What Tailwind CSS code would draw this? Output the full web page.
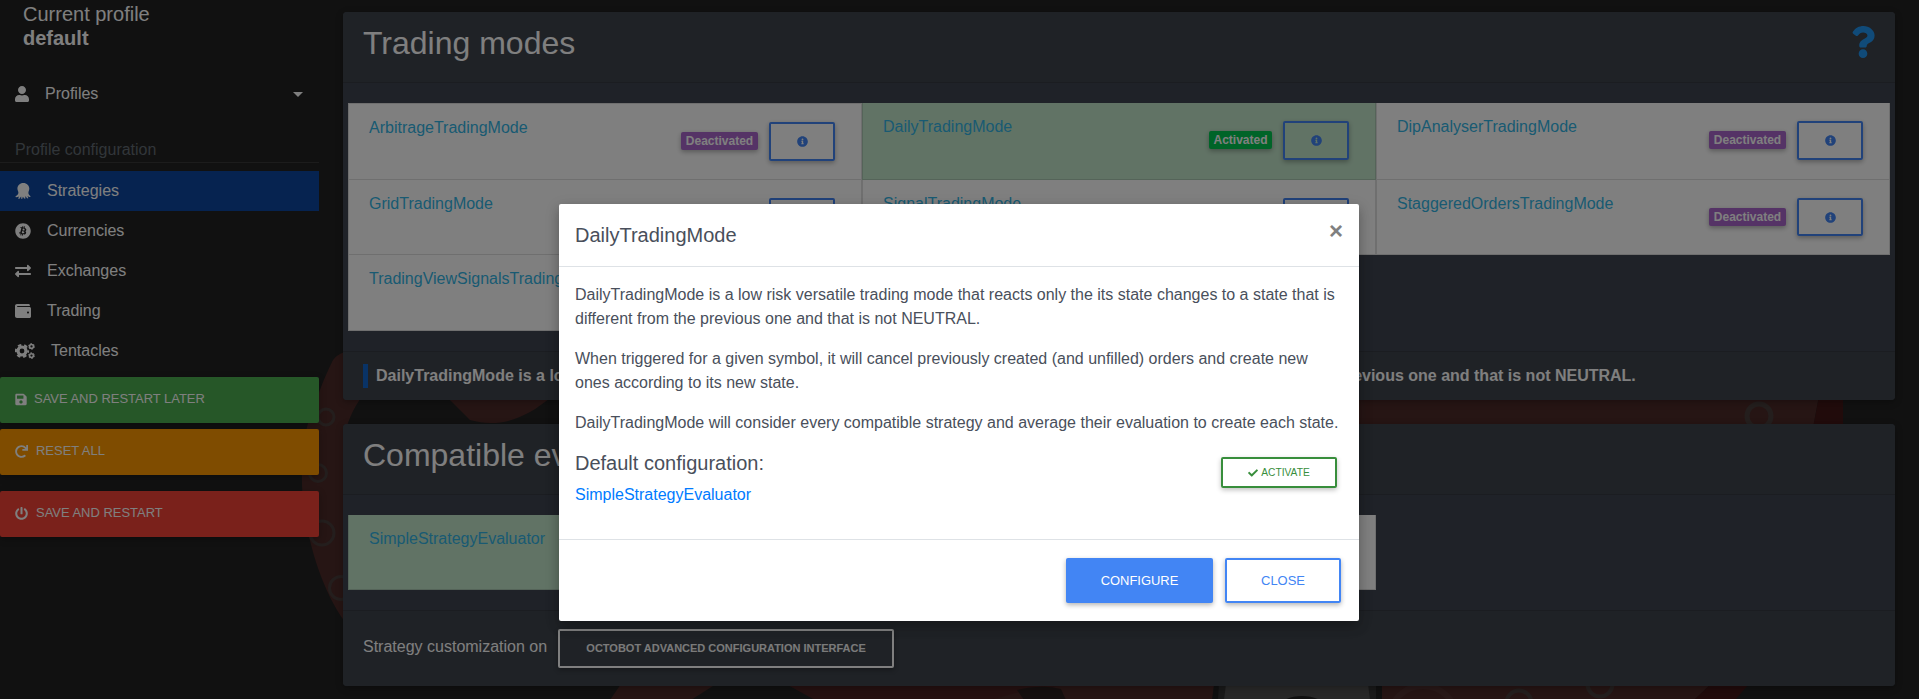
<!DOCTYPE html>
<html lang="en">
<head>
<meta charset="utf-8">
<title>OctoBot - Profile</title>
<script src="https://cdn.jsdelivr.net/npm/@tailwindcss/browser@4"></script>
</head>
<body class="relative h-[699px] w-[1919px] overflow-hidden bg-[#222] font-['Liberation_Sans',Arial,sans-serif] text-base text-white">

<!-- icon sprite -->
<svg class="hidden">
  <symbol id="user" viewBox="0 0 448 512"><path d="M224 256c70.7 0 128-57.3 128-128S294.7 0 224 0 96 57.3 96 128s57.3 128 128 128zm89.6 32h-16.7c-22.2 10.2-46.9 16-72.9 16s-50.6-5.8-72.9-16h-16.7C60.2 288 0 348.2 0 422.4V464c0 26.5 21.5 48 48 48h352c26.5 0 48-21.5 48-48v-41.6c0-74.2-60.2-134.4-134.4-134.4z"/></symbol>
  <symbol id="octopus" viewBox="0 0 16 16"><path d="M8.300 0C4.800 0 2.400 2.500 2.400 5.600c0 2 1 2.800 1 4.200 0 1.600-1.200 2.200-2.900 3.600-.3.500.1.900.7.800 1.100-.1 1.900-.4 2.800-.8-.2.700-.6 1.100-.7 1.900 0 .6.600.8 1.100.4.800-.7 1.100-1.500 1.700-2.100.300.700 0 1.300.1 1.900.2.600 1 .600 1.200 0 .200-.600.200-1.300.500-1.800.700.500.800 1.300 1.500 1.900.500.400 1.100 0 1-.600 0-.600-.3-1.100-.2-1.700.900.400 1.200 1.400 2 2 .6.400 1.200 0 1-.600-.200-.700-.600-1.200-.700-1.800.900.400 1.500 1 2.500 1 .6 0 .700-.600.300-1-1.300-1-1.900-1.700-1.900-3.200 0-1.400.900-2.200.900-4.100C14.300 2.500 11.800 0 8.300 0z"/></symbol>
  <symbol id="bitcoin" viewBox="0 0 512 512"><path d="M504 256c0 136.967-111.033 248-248 248S8 392.967 8 256 119.033 8 256 8s248 111.033 248 248zm-141.651-35.33c4.937-32.999-20.191-50.739-54.55-62.573l11.146-44.702-27.213-6.781-10.851 43.524c-7.154-1.783-14.502-3.464-21.803-5.13l10.929-43.81-27.198-6.781-11.153 44.686c-5.922-1.349-11.735-2.682-17.377-4.084l.031-.14-37.53-9.37-7.239 29.062s20.191 4.627 19.765 4.913c11.022 2.751 13.014 10.044 12.68 15.825l-12.696 50.925c.76.194 1.744.473 2.829.907-.907-.225-1.876-.473-2.876-.713l-17.796 71.338c-1.349 3.348-4.767 8.37-12.471 6.464.271.395-19.78-4.937-19.78-4.937l-13.51 31.147 35.414 8.827c6.588 1.651 13.045 3.379 19.4 5.006l-11.262 45.213 27.182 6.781 11.153-44.733a1038.209 1038.209 0 0 0 21.687 5.627l-11.115 44.523 27.213 6.781 11.262-45.128c46.404 8.781 81.299 5.239 95.986-36.727 11.834-33.79-.589-53.281-25.004-65.991 17.78-4.098 31.174-15.792 34.747-39.949zm-62.177 87.179c-8.41 33.79-65.308 15.523-83.755 10.943l14.944-59.899c18.446 4.603 77.6 13.717 68.811 48.956zm8.417-87.667c-7.673 30.736-55.031 15.12-70.393 11.292l13.548-54.327c15.363 3.828 64.836 10.973 56.845 43.035z"/></symbol>
  <symbol id="exchange" viewBox="0 0 512 512"><path d="M0 168v-16c0-13.255 10.745-24 24-24h360V80c0-21.367 25.899-32.042 40.971-16.971l80 80c9.372 9.373 9.372 24.569 0 33.941l-80 80C409.956 271.982 384 261.456 384 240v-48H24c-13.255 0-24-10.745-24-24zm488 152H128v-48c0-21.314-25.862-32.08-40.971-16.971l-80 80c-9.372 9.373-9.372 24.569 0 33.941l80 80C102.057 463.997 128 453.437 128 432v-48h360c13.255 0 24-10.745 24-24v-16c0-13.255-10.745-24-24-24z"/></symbol>
  <symbol id="wallet" viewBox="0 0 512 512"><path d="M461.2 128H80c-8.84 0-16-7.16-16-16s7.16-16 16-16h384c8.84 0 16-7.16 16-16 0-26.51-21.49-48-48-48H64C28.65 32 0 60.65 0 96v320c0 35.35 28.65 64 64 64h397.2c28.02 0 50.8-21.53 50.8-48V176c0-26.47-22.78-48-50.8-48zM416 336c-17.67 0-32-14.33-32-32s14.33-32 32-32 32 14.33 32 32-14.33 32-32 32z"/></symbol>
  <symbol id="cogs" viewBox="0 0 20 16"><g fill="none" stroke="currentColor"><circle cx="7" cy="8" r="4" stroke-width="3.200"/><circle cx="7" cy="8" r="6.100" stroke-width="2" stroke-dasharray="3.400 2.990" stroke-dashoffset="1.700"/><circle cx="16.500" cy="3.400" r="1.900" stroke-width="1.500"/><circle cx="16.500" cy="3.400" r="2.900" stroke-width="1" stroke-dasharray="1.600 1.440"/><circle cx="16.500" cy="12.600" r="1.900" stroke-width="1.500"/><circle cx="16.500" cy="12.600" r="2.900" stroke-width="1" stroke-dasharray="1.600 1.440"/></g></symbol>
  <symbol id="save" viewBox="0 0 448 512"><path d="M433.941 129.941l-83.882-83.882A48 48 0 0 0 316.118 32H48C21.49 32 0 53.49 0 80v352c0 26.51 21.49 48 48 48h352c26.51 0 48-21.49 48-48V163.882a48 48 0 0 0-14.059-33.941zM224 416c-35.346 0-64-28.654-64-64 0-35.346 28.654-64 64-64s64 28.654 64 64c0 35.346-28.654 64-64 64zm96-304.52V212c0 6.627-5.373 12-12 12H76c-6.627 0-12-5.373-12-12V108c0-6.627 5.373-12 12-12h228.52c3.183 0 6.235 1.264 8.485 3.515l3.48 3.480A11.996 11.996 0 0 1 320 111.480z"/></symbol>
  <symbol id="redo" viewBox="0 0 512 512"><path d="M500.33 0h-47.41a12 12 0 0 0-12 12.57l4 82.76A247.42 247.42 0 0 0 256 8C119.34 8 7.900 119.530 8 256.190 8.100 393.070 119.100 504 256 504a247.100 247.100 0 0 0 166.180-63.910 12 12 0 0 0 .480-17.430l-34-34a12 12 0 0 0-16.380-.550A176 176 0 1 1 402.100 157.800l-101.530-4.870a12 12 0 0 0-12.570 12v47.410a12 12 0 0 0 12 12h200.330a12 12 0 0 0 12-12V12a12 12 0 0 0-12-12z"/></symbol>
  <symbol id="power" viewBox="0 0 512 512"><path d="M400 54.1c63 45 104 118.6 104 201.9 0 136.8-110.8 247.7-247.5 248C120 504.3 8.2 393 8 256.4 7.9 173.1 48.9 99.3 111.8 54.2c11.7-8.3 28-4.8 35 7.7L162.6 90c5.9 10.5 3.1 23.8-6.6 31-41.5 30.8-68 79.6-68 134.9-.1 92.3 74.5 168.1 168 168.1 91.6 0 168.6-74.2 168-169.1-.3-51.8-24.7-101.8-68.1-134-9.7-7.2-12.4-20.5-6.5-30.9l15.8-28.1c7-12.4 23.2-16.1 34.8-7.8zM296 264V24c0-13.3-10.7-24-24-24h-32c-13.3 0-24 10.7-24 24v240c0 13.3 10.7 24 24 24h32c13.3 0 24-10.7 24-24z"/></symbol>
  <symbol id="info" viewBox="0 0 512 512"><path d="M256 8C119.043 8 8 119.083 8 256c0 136.997 111.043 248 248 248s248-111.003 248-248C504 119.083 392.957 8 256 8zm0 110c23.196 0 42 18.804 42 42s-18.804 42-42 42-42-18.804-42-42 18.804-42 42-42zm56 254c0 6.627-5.373 12-12 12h-88c-6.627 0-12-5.373-12-12v-24c0-6.627 5.373-12 12-12h12v-64h-12c-6.627 0-12-5.373-12-12v-24c0-6.627 5.373-12 12-12h64c6.627 0 12 5.373 12 12v100h12c6.627 0 12 5.373 12 12v24z"/></symbol>
  <symbol id="check" viewBox="0 0 512 512"><path d="M173.898 439.404l-166.4-166.4c-9.997-9.997-9.997-26.206 0-36.204l36.203-36.204c9.997-9.998 26.207-9.998 36.204 0L192 312.69 432.095 72.596c9.997-9.997 26.207-9.997 36.204 0l36.203 36.204c9.997 9.997 9.997 26.206 0 36.204l-294.4 294.401c-9.998 9.997-26.207 9.997-36.204-.001z"/></symbol>
  <symbol id="question" viewBox="0 0 384 512"><path d="M202.021 0C122.202 0 70.503 32.703 29.914 91.026c-7.363 10.58-5.093 25.086 5.178 32.874l43.138 32.709c10.373 7.865 25.132 6.026 33.253-4.148 25.049-31.381 43.63-49.449 82.757-49.449 30.764 0 68.816 19.799 68.816 49.631 0 22.552-18.617 34.134-48.993 51.164-35.423 19.86-82.299 44.576-82.299 106.405V320c0 13.255 10.745 24 24 24h72.471c13.255 0 24-10.745 24-24v-5.773c0-42.86 125.268-44.645 125.268-160.627C377.504 66.256 286.902 0 202.021 0zM192 373.459c-38.196 0-69.271 31.075-69.271 69.271 0 38.195 31.075 69.270 69.271 69.270s69.271-31.075 69.271-69.271-31.075-69.270-69.271-69.270z"/></symbol>
</svg>

<!-- octopus wallpaper -->
<svg class="absolute inset-0" width="1919" height="699" viewBox="0 0 1919 699" fill="none">
  <g fill="#4c2a28">
    <path d="M350 350C340 353 334 357 332 362C324 378 316 400 309 420C301 445 301 480 303 500C308 545 322 590 345 622L400 622L346 430C349 418 354 408 362 396Z"/>
    <path d="M446 396L470 420C498 428 525 420 552 396Z"/>
    <path d="M1300 396H1819L1813 428H1300Z"/>
    <path d="M621 684L610 700H691L716 684Z"/>
    <path d="M1376 684H1711L1694 700H1376Z"/>
  </g>
  <path fill="#4a2222" d="M786 684L815 700H1222V684Z"/>
  <path fill="#4c2a28" d="M990 700L1020 692L1060 686H1222V700Z"/>
  <path fill="#421717" d="M1819 396H1843V428H1813ZM1711 684H1749L1735 700H1694Z"/>
  <path fill="#2a1f1e" d="M1017 690Q1042 684 1061 689L1066 700H1024Z"/>
  <g stroke="#483d3b" stroke-width="3">
    <circle cx="326" cy="417" r="8"/><circle cx="318" cy="473" r="8.500"/>
    <circle cx="322" cy="533" r="12"/><circle cx="341" cy="588" r="11.500"/>
    <circle cx="1759" cy="416" r="12" stroke-width="5"/>
    <circle cx="1519" cy="703" r="12.500" stroke-width="4"/>
    <circle cx="1600" cy="684" r="12.500" stroke-width="4"/>
  </g>
  <circle cx="1423" cy="720" r="34" stroke="#523230" stroke-width="6"/>
  <path fill="#202020" d="M1214 684H1382V700H1212Z"/>
  <path fill="#333" d="M1219 684H1376V700H1218Z"/>
  <path fill="#505050" d="M1226 684H1368L1370 700H1224Z"/>
  <ellipse cx="1302" cy="706" rx="22" ry="10" fill="#202020"/>
</svg>

<div class="relative flex h-full">
  <!-- sidebar -->
  <aside class="flex w-[319px] shrink-0 flex-col">
    <div class="pt-[2px] pl-[23px] text-xl leading-6">Current profile<br><b>default</b></div>
    <div class="mt-[32px] flex h-6 items-center pl-[15px]">
      <svg class="h-4 w-[14px] fill-current"><use href="#user"/></svg>
      <span class="ml-4">Profiles</span>
      <i class="mr-4 ml-auto border-x-[5px] border-t-[5px] border-x-transparent border-t-white"></i>
    </div>
    <div class="mt-8 h-[25px] border-b border-white/10 pl-[15px] leading-6 text-[#636c74]">Profile configuration</div>
    <nav class="mt-2">
      <a class="flex h-10 items-center bg-[#0d47a1] pl-[15px]"><svg class="h-4 w-4 fill-current"><use href="#octopus"/></svg><span class="ml-4">Strategies</span></a>
      <a class="flex h-10 items-center pl-[15px]"><svg class="h-4 w-4 fill-current"><use href="#bitcoin"/></svg><span class="ml-4">Currencies</span></a>
      <a class="flex h-10 items-center pl-[15px]"><svg class="h-4 w-4 fill-current"><use href="#exchange"/></svg><span class="ml-4">Exchanges</span></a>
      <a class="flex h-10 items-center pl-[15px]"><svg class="h-4 w-4 fill-current"><use href="#wallet"/></svg><span class="ml-4">Trading</span></a>
      <a class="flex h-10 items-center pl-[15px]"><svg class="h-4 w-5 fill-current"><use href="#cogs"/></svg><span class="ml-4">Tentacles</span></a>
    </nav>
    <button class="mt-[6px] flex h-[46px] items-center rounded-xs bg-[#4caf50] pb-[2px] pl-[15px] text-[12.96px] shadow-[0_2px_5px_rgba(0,0,0,.16),0_2px_10px_rgba(0,0,0,.12)]"><svg class="h-[13px] w-3 fill-current"><use href="#save"/></svg><span class="ml-[7px]">SAVE AND RESTART LATER</span></button>
    <button class="mt-[6px] flex h-[46px] items-center rounded-xs bg-[#ff9800] pb-[2px] pl-[15px] text-[12.96px] shadow-[0_2px_5px_rgba(0,0,0,.16),0_2px_10px_rgba(0,0,0,.12)]"><svg class="h-[13px] w-[13px] fill-current"><use href="#redo"/></svg><span class="ml-[8px]">RESET ALL</span></button>
    <button class="mt-4 flex h-[46px] items-center rounded-xs bg-[#f44336] pb-[2px] pl-[15px] text-[12.96px] shadow-[0_2px_5px_rgba(0,0,0,.16),0_2px_10px_rgba(0,0,0,.12)]"><svg class="h-[13px] w-[13px] fill-current"><use href="#power"/></svg><span class="ml-[8px]">SAVE AND RESTART</span></button>
  </aside>

  <!-- content -->
  <main class="ml-6 flex w-[1552px] flex-col gap-6 pt-3">
    <section class="h-[388px] overflow-hidden rounded bg-[#3e4551] shadow-[0_2px_5px_rgba(0,0,0,.16),0_2px_10px_rgba(0,0,0,.12)]">
      <header class="flex h-[71px] justify-between border-b border-black/12 bg-[#3e444c] pt-3 pr-5 pl-5">
        <h2 class="text-[32px] leading-[38px]">Trading modes</h2>
        <svg class="mt-[2px] h-8 w-6 fill-[#2196f3]"><use href="#question"/></svg>
      </header>
      <div class="grid h-[268px] grid-cols-[514px_514px_514px] grid-rows-[77px_75px_76px] px-[5px] pt-5 text-[#33b5e5]">
        <div class="flex items-start border border-[#dfdfdf] bg-white pt-3 pr-[26px] pl-5"><span class="mr-auto">ArbitrageTradingMode</span><b class="mt-4 mr-[11px] h-[18px] w-[77px] rounded-xs bg-[#a6c] text-center text-xs leading-[18px] text-white shadow-[0_2px_5px_rgba(0,0,0,.3)]">Deactivated</b><button class="mt-[6px] flex h-[39px] w-[66px] items-center justify-center rounded-xs border-2 border-[#4285f4] shadow-[0_2px_5px_rgba(0,0,0,.3)]"><svg class="h-[11px] w-[11px] fill-[#4285f4]"><use href="#info"/></svg></button></div>
        <div class="flex items-start border border-t-0 border-[#abc9b2] bg-[#c3e6cb] pt-3 pr-[26px] pl-5"><span class="mr-auto">DailyTradingMode</span><b class="mt-4 mr-[11px] h-[18px] w-[63px] rounded-xs bg-[#00c851] text-center text-xs leading-[18px] text-white shadow-[0_2px_5px_rgba(0,0,0,.3)]">Activated</b><button class="mt-[6px] flex h-[39px] w-[66px] items-center justify-center rounded-xs border-2 border-[#4285f4] shadow-[0_2px_5px_rgba(0,0,0,.3)]"><svg class="h-[11px] w-[11px] fill-[#4285f4]"><use href="#info"/></svg></button></div>
        <div class="flex items-start border border-t-0 border-[#dfdfdf] bg-white pt-3 pr-[26px] pl-5"><span class="mr-auto">DipAnalyserTradingMode</span><b class="mt-4 mr-[11px] h-[18px] w-[77px] rounded-xs bg-[#a6c] text-center text-xs leading-[18px] text-white shadow-[0_2px_5px_rgba(0,0,0,.3)]">Deactivated</b><button class="mt-[6px] flex h-[39px] w-[66px] items-center justify-center rounded-xs border-2 border-[#4285f4] shadow-[0_2px_5px_rgba(0,0,0,.3)]"><svg class="h-[11px] w-[11px] fill-[#4285f4]"><use href="#info"/></svg></button></div>
        <div class="flex items-start border border-t-0 border-[#dfdfdf] bg-white pt-3 pr-[26px] pl-5"><span class="mr-auto">GridTradingMode</span><button class="mt-[6px] flex h-[39px] w-[66px] items-center justify-center rounded-xs border-2 border-[#4285f4]"></button></div>
        <div class="flex items-start border border-t-0 border-[#dfdfdf] bg-white pt-3 pr-[26px] pl-5"><span class="mr-auto">SignalTradingMode</span><button class="mt-[6px] flex h-[39px] w-[66px] items-center justify-center rounded-xs border-2 border-[#4285f4]"></button></div>
        <div class="flex items-start border border-t-0 border-[#dfdfdf] bg-white pt-3 pr-[26px] pl-5"><span class="mr-auto">StaggeredOrdersTradingMode</span><b class="mt-4 mr-[11px] h-[18px] w-[77px] rounded-xs bg-[#a6c] text-center text-xs leading-[18px] text-white shadow-[0_2px_5px_rgba(0,0,0,.3)]">Deactivated</b><button class="mt-[6px] flex h-[38px] w-[66px] items-center justify-center rounded-xs border-2 border-[#4285f4] shadow-[0_2px_5px_rgba(0,0,0,.3)]"><svg class="h-[11px] w-[11px] fill-[#4285f4]"><use href="#info"/></svg></button></div>
        <div class="border border-t-0 border-[#dfdfdf] bg-white pt-3 pl-5">TradingViewSignalsTradingMode</div>
      </div>
      <footer class="h-[49px] border-t border-black/12 bg-[#3e444c] px-5 pt-3">
        <p class="h-6 border-l-[5px] border-[#1266cc] pl-2 font-bold whitespace-nowrap">DailyTradingMode is a low risk versatile trading mode that reacts only the its state changes to a state that is different from the previous one and that is not NEUTRAL.</p>
      </footer>
    </section>

    <section class="h-[262px] overflow-hidden rounded bg-[#3e4551] shadow-[0_2px_5px_rgba(0,0,0,.16),0_2px_10px_rgba(0,0,0,.12)]">
      <header class="h-[71px] border-b border-black/12 bg-[#3e444c] pt-3 pl-5">
        <h2 class="text-[32px] leading-[38px]">Compatible evaluators</h2>
      </header>
      <div class="flex h-[115px] px-[5px] pt-5 text-[#33b5e5]">
        <div class="h-[75px] w-[514px] border border-t-0 border-[#abc9b2] bg-[#c3e6cb] pt-3 pl-5">SimpleStrategyEvaluator</div>
        <div class="h-[75px] w-[514px] border border-t-0 border-[#dfdfdf] bg-white"></div>
      </div>
      <footer class="flex h-[76px] items-start border-t border-black/12 bg-[#3e444c] pt-[18px] pl-5">
        <span class="mt-[6px]">Strategy customization on</span>
        <button class="ml-[11px] h-[39px] w-[336px] rounded-xs border-2 border-white text-[11px] font-bold text-[#f4f4f4] shadow-[0_2px_5px_rgba(0,0,0,.3)]">OCTOBOT ADVANCED CONFIGURATION INTERFACE</button>
      </footer>
    </section>
  </main>
</div>

<!-- modal -->
<div class="absolute inset-0 flex items-start justify-center bg-black/50 pt-[204px] pr-px">
  <div class="h-[417px] w-[800px] rounded-xs bg-white text-[#494f5b] shadow-[0_5px_11px_rgba(0,0,0,.18),0_4px_15px_rgba(0,0,0,.15)]">
    <div class="flex h-[63px] justify-between border-b border-[#dee2e6] px-4 pt-4">
      <h5 class="text-xl leading-[30px]">DailyTradingMode</h5>
      <span class="-mt-px text-2xl leading-6 font-bold text-[#808080]">×</span>
    </div>
    <div class="h-[272px] px-4 pt-4 leading-6">
      <p class="mb-4">DailyTradingMode is a low risk versatile trading mode that reacts only the its state changes to a state that is different from the previous one and that is not NEUTRAL.</p>
      <p class="mb-4">When triggered for a given symbol, it will cancel previously created (and unfilled) orders and create new ones according to its new state.</p>
      <p class="mb-4 whitespace-nowrap">DailyTradingMode will consider every compatible strategy and average their evaluation to create each state.</p>
      <div class="flex items-start justify-between">
        <div>
          <h5 class="mb-2 text-xl leading-6">Default configuration:</h5>
          <a class="block text-[#007bff]">SimpleStrategyEvaluator</a>
        </div>
        <button class="mt-[6px] mr-[6px] flex h-[31px] w-[116px] items-center justify-center gap-[3px] rounded-xs border-2 border-[#388e3c] text-[10.24px] text-[#388e3c] shadow-[0_2px_5px_rgba(0,0,0,.25)]"><svg class="h-[10px] w-[10px] fill-current"><use href="#check"/></svg>ACTIVATE</button>
      </div>
    </div>
    <div class="flex h-[82px] justify-end gap-3 border-t border-[#dee2e6] pt-[18px] pr-[18px] text-[12.96px]">
      <button class="h-[45px] w-[147px] rounded-xs bg-[#4285f4] text-white shadow-[0_2px_5px_rgba(0,0,0,.3)]">CONFIGURE</button>
      <button class="h-[45px] w-[116px] rounded-xs border-2 border-[#4285f4] text-[#4285f4] shadow-[0_2px_5px_rgba(0,0,0,.3)]">CLOSE</button>
    </div>
  </div>
</div>
</body>
</html>
